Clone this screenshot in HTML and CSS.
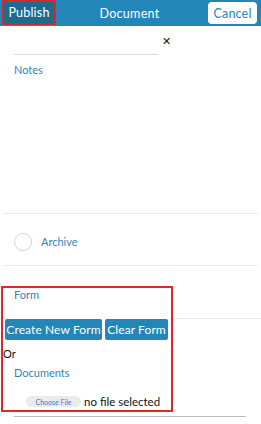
FILE: index.html
```html
<!DOCTYPE html>
<html>
<head>
<meta charset="utf-8">
<link rel="stylesheet" href="styles.css">
</head>
<body>
<header class="topbar">
  <button class="btn-publish">Publish</button>
  <div class="title">Document</div>
  <button class="btn-cancel">Cancel</button>
</header>
<main class="content">
  <div class="search-row">
    <div class="search-field"></div>
    <span class="clear-x">&#x2715;</span>
  </div>
  <div class="label notes-label">Notes</div>
  <div class="notes-area"></div>
  <div class="archive-row">
    <span class="radio"></span>
    <span class="label">Archive</span>
  </div>
  <div class="form-row">
    <section class="highlight">
      <div class="label form-label">Form</div>
      <div class="form-buttons">
        <button class="btn-blue btn-create">Create New Form</button>
        <button class="btn-blue btn-clear">Clear Form</button>
      </div>
      <div class="or">Or</div>
      <div class="label docs-label">Documents</div>
      <div class="file-row">
        <span class="choose-file">Choose File</span>
        <span class="no-file">no file selected</span>
      </div>
    </section>
    <div class="form-side"></div>
  </div>
  <div class="bottom-line"></div>
</main>
</body>
</html>
```
FILE: styles.css
```css
* { box-sizing: border-box; }
body {
  margin: 0;
  font-family: "Lato", "Open Sans", sans-serif;
  background: #fff;
  width: 261px;
  overflow: hidden;
}
button { font-family: inherit; }
.topbar {
  height: 26px;
  background: #2386b9;
  display: grid;
  grid-template-columns: 1fr auto 1fr;
  align-items: center;
  padding: 0 4px 0 2px;
}
.btn-publish {
  justify-self: start;
  align-self: start;
  height: 25px;
  width: 54px;
  background: #1c6b8f;
  color: #fff;
  border: 2px solid #d8262e;
  font-size: 12.5px;
  letter-spacing: 0.2px;
  padding: 0;
}
.title {
  color: #fff;
  font-size: 12.5px;
  letter-spacing: 0.3px;
}
.btn-cancel {
  justify-self: end;
  height: 22px;
  width: 49px;
  background: #fff;
  color: #2386b9;
  border: none;
  border-radius: 4px;
  font-size: 12.5px;
  letter-spacing: 0.2px;
  padding: 0;
}
.content { display: flex; flex-direction: column; }
.search-row {
  display: flex;
  align-items: flex-start;
  height: 29px;
}
.search-field {
  margin-left: 14px;
  width: 144px;
  height: 29px;
  border-bottom: 1px solid #dcdcdc;
}
.clear-x {
  margin-left: 4px;
  margin-top: 8px;
  font-size: 11px;
  color: #111;
  line-height: 13px;
}
.label {
  color: #2e86b6;
  font-size: 11px;
  line-height: 14px;
}
.notes-label { margin: 8px 0 0 14px; }
.notes-area {
  height: 137px;
  margin: 0 3px;
  border-bottom: 1px solid #ececec;
}
.archive-row {
  display: flex;
  align-items: center;
  height: 52px;
  margin: 0 3px;
  border-bottom: 1px solid #ececec;
  padding-left: 11px;
  padding-top: 4px;
}
.radio {
  width: 18px;
  height: 18px;
  border-radius: 50%;
  border: 1px solid #d4d4d4;
  margin-right: 9px;
}
.form-row {
  display: flex;
  margin-top: 20px;
}
.highlight {
  margin-left: 1px;
  width: 172px;
  height: 126px;
  border: 2px solid #e0262c;
  display: flex;
  flex-direction: column;
}
.form-label { margin: 0 0 0 11px; line-height: 14px; }
.form-buttons {
  display: flex;
  gap: 3px;
  margin: 17px 0 0 2px;
}
.btn-blue {
  height: 21px;
  background: #2386b9;
  color: #fff;
  border: none;
  border-radius: 2px;
  font-size: 12px;
  letter-spacing: 0.1px;
  padding: 0;
  white-space: nowrap;
}
.btn-create { width: 97px; }
.btn-clear { width: 63px; }
.or {
  font-size: 11px;
  line-height: 14px;
  color: #111;
  margin-top: 7px;
}
.docs-label { margin: 5px 0 0 11px; }
.file-row {
  display: flex;
  align-items: center;
  margin: 15px 0 0 23px;
}
.choose-file {
  background: #ebebeb;
  color: #2f7fcf;
  font-size: 7px;
  height: 11px;
  width: 55px;
  border-radius: 6px;
  display: flex;
  align-items: center;
  justify-content: center;
}
.no-file {
  font-size: 11.5px;
  color: #111;
  margin-left: 3px;
}
.form-side {
  flex: 1;
  margin-top: 32px;
  height: 1px;
  border-top: 1px solid #ececec;
}
.bottom-line {
  margin: 4px 15px 0 14px;
  border-top: 1px solid #bcbcbc;
}
```
